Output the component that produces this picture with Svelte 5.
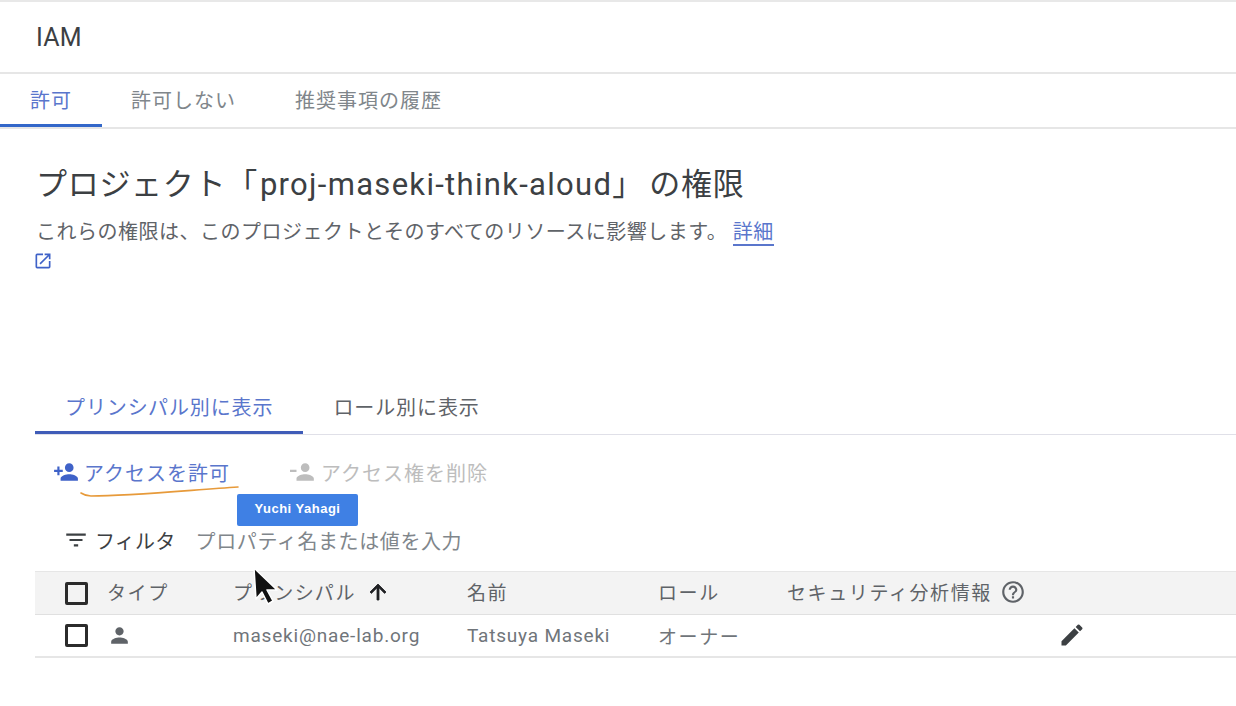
<script>
  const topTabs = ['許可', '許可しない', '推奨事項の履歴'];
</script>

<div class="page">
  <header class="bar">IAM</header>

  <nav class="top-tabs">
    {#each topTabs as tab, i}
      <div class="top-tab" class:active={i === 0}>{tab}</div>
    {/each}
  </nav>

  <main class="content">
    <h1>プロジェクト「<span class="latin">proj-maseki-think-aloud</span>」 の権限</h1>
    <p class="desc">これらの権限は、このプロジェクトとそのすべてのリソースに影響します。 <a href="#top">詳細</a></p>
    <svg class="ext" viewBox="0 0 24 24" width="20" height="20"><path fill="#3f62c8" d="M19 19H5V5h7V3H5a2 2 0 0 0-2 2v14a2 2 0 0 0 2 2h14a2 2 0 0 0 2-2v-7h-2v7zM14 3v2h3.59l-9.83 9.83 1.41 1.41L19 6.41V10h2V3h-7z"/></svg>

    <div class="view-tabs">
      <div class="view-tab active">プリンシパル別に表示</div>
      <div class="view-tab">ロール別に表示</div>
    </div>

    <div class="actions">
      <div class="action grant">
        <svg viewBox="0 0 24 24" width="26" height="26"><path fill="#3f62c8" d="M15 12c2.21 0 4-1.79 4-4s-1.79-4-4-4-4 1.79-4 4 1.79 4 4 4zm-9-2V7H4v3H1v2h3v3h2v-3h3v-2H6zm9 4c-2.67 0-8 1.34-8 4v2h16v-2c0-2.66-5.33-4-8-4z"/></svg>
        <span>アクセスを許可</span>
      </div>
      <div class="action remove">
        <svg viewBox="0 0 24 24" width="26" height="26"><path fill="#bdbdbd" d="M14 12c2.21 0 4-1.79 4-4s-1.79-4-4-4-4 1.79-4 4 1.79 4 4 4zM0 10v2h6v-2H0zm14 4c-2.67 0-8 1.34-8 4v2h16v-2c0-2.66-5.33-4-8-4z"/></svg>
        <span>アクセス権を削除</span>
      </div>
    </div>

    <div class="filter">
      <svg viewBox="0 0 24 24" width="26" height="26"><path fill="#3c4043" d="M10 18h4v-2h-4v2zM3 6v2h18V6H3zm3 7h12v-2H6v2z"/></svg>
      <span class="filter-label">フィルタ</span>
      <span class="filter-hint">プロパティ名または値を入力</span>
    </div>

    <div class="table">
      <div class="row head">
        <span class="c-check"><i class="box"></i></span>
        <span class="c-type label">タイプ</span>
        <span class="c-principal label">プリンシパル
          <svg viewBox="0 0 24 24" width="24" height="24"><path fill="#202124" stroke="#202124" stroke-width="0.8" d="M4 12l1.41 1.41L11 7.83V20h2V7.83l5.58 5.59L20 12l-8-8-8 8z"/></svg>
        </span>
        <span class="c-name label">名前</span>
        <span class="c-role label">ロール</span>
        <span class="c-sec label">セキュリティ分析情報
          <svg viewBox="0 0 24 24" width="26" height="26"><path fill="#5f6368" d="M11 18h2v-2h-2v2zm1-16C6.48 2 2 6.48 2 12s4.48 10 10 10 10-4.48 10-10S17.52 2 12 2zm0 18c-4.41 0-8-3.59-8-8s3.59-8 8-8 8 3.59 8 8-3.59 8-8 8zm0-14c-2.21 0-4 1.79-4 4h2c0-1.1.9-2 2-2s2 .9 2 2c0 2-3 1.75-3 5h2c0-2.25 3-2.5 3-5 0-2.21-1.79-4-4-4z"/></svg>
        </span>
      </div>
      <div class="row body">
        <span class="c-check"><i class="box"></i></span>
        <span class="c-type">
          <svg viewBox="0 0 24 24" width="25" height="25"><path fill="#5f6368" d="M12 12c2.21 0 4-1.79 4-4s-1.79-4-4-4-4 1.79-4 4 1.79 4 4 4zm0 2c-2.67 0-8 1.34-8 4v2h16v-2c0-2.66-5.33-4-8-4z"/></svg>
        </span>
        <span class="c-principal">maseki@nae-lab.org</span>
        <span class="c-name">Tatsuya Maseki</span>
        <span class="c-role owner">オーナー</span>
        <span class="c-sec"></span>
        <svg class="edit" viewBox="0 0 24 24" width="28" height="28"><path fill="#3c4043" d="M3 17.25V21h3.75L17.81 9.94l-3.75-3.75L3 17.25zM20.71 7.04a1 1 0 0 0 0-1.41l-2.34-2.34a1 1 0 0 0-1.41 0l-1.83 1.83 3.75 3.75 1.83-1.83z"/></svg>
      </div>
    </div>
  </main>

  <!-- things lying over the recording -->
  <svg class="scribble" viewBox="0 0 160 16" width="160" height="16"><path d="M1 9c3 2 5 3 10 3 40 0 100-6 147-9" fill="none" stroke="#e79a3a" stroke-width="1.6" stroke-linecap="round"/></svg>
  <div class="name-tag">Yuchi Yahagi</div>
  <svg class="cursor" viewBox="0 0 28 40" width="28" height="40"><path d="M2 2l2 31 6-7 6 12 5-3-6-11h10z" fill="#111" stroke="#fff" stroke-width="1.5" stroke-linejoin="round"/></svg>
</div>

<style>
  :global(body) {
    margin: 0;
    background: #fff;
  }

  .page {
    position: relative;
    width: 1236px;
    height: 706px;
    overflow: hidden;
    box-sizing: border-box;
    border-top: 2px solid #e8e8e8;
    font-family: Roboto, "Noto Sans CJK JP", sans-serif;
    color: #5f6368;
    text-spacing-trim: space-all;
  }

  .bar {
    height: 70px;
    padding-left: 36px;
    display: flex;
    align-items: center;
    font-size: 25px;
    letter-spacing: 0.2px;
    color: #3c4043;
    border-bottom: 2px solid #e6e6e6;
  }

  .top-tabs {
    display: flex;
    height: 53px;
    border-bottom: 2px solid #e6e6e6;
  }

  .top-tab {
    box-sizing: border-box;
    height: 53px;
    display: flex;
    align-items: center;
    font-size: 20px;
    padding: 1px 30px 0 29px;
    letter-spacing: 1px;
    color: #80868b;
    border-bottom: 3px solid transparent;
  }

  .top-tab.active {
    width: 102px;
    padding-left: 30px;
    color: #5a76cc;
    border-bottom-color: #3367c9;
  }

  .content {
    padding: 0 0 0 36px;
  }

  h1 {
    margin: 34px 0 0;
    font-size: 31px;
    font-weight: 400;
    line-height: 44px;
    letter-spacing: 0.7px;
    word-spacing: -3px;
    color: #3c4043;
  }

  .latin {
    margin-left: 2px;
    letter-spacing: 1.3px;
  }

  .desc {
    margin: 10px 0 0;
    font-size: 20px;
    line-height: 30px;
    letter-spacing: 0.5px;
    color: #5f6368;
  }

  .desc a {
    color: #5a76cc;
    text-decoration: none;
    border-bottom: 2px solid #5a76cc;
  }

  .ext {
    display: block;
    margin: 4px 0 0 -3px;
  }

  .view-tabs {
    display: flex;
    margin: 110px 0 0 -1px;
    height: 53px;
    border-bottom: 1px solid #e0e0e8;
    align-items: stretch;
  }

  .view-tab {
    box-sizing: border-box;
    height: 53px;
    display: flex;
    align-items: center;
    padding: 0 30px 2px;
    font-size: 20px;
    letter-spacing: 0.9px;
    color: #5f6368;
  }

  .view-tab.active {
    color: #5a76cc;
    padding-bottom: 0;
    border-bottom: 3px solid #3f5cb8;
  }

  .actions {
    display: flex;
    align-items: center;
    margin-top: 23px;
    padding-left: 17px;
    height: 28px;
    font-size: 20px;
    letter-spacing: 1px;
  }

  .action {
    display: flex;
    align-items: center;
    gap: 5px;
  }

  .grant {
    color: #5a76cc;
    margin-right: 60px;
  }

  .remove {
    color: #bdbdbd;
  }

  .filter {
    display: flex;
    align-items: center;
    margin-top: 39px;
    padding-left: 27px;
    height: 30px;
    font-size: 20px;
  }

  .filter-label {
    margin-left: 6px;
    color: #3c4043;
    letter-spacing: 0.25px;
  }

  .filter-hint {
    margin-left: 20px;
    color: #80868b;
    letter-spacing: 0.6px;
  }

  .table {
    margin: 16px 0 0 -1px;
  }

  .row {
    display: flex;
    align-items: center;
    font-size: 19px;
    position: relative;
  }

  .head {
    height: 42px;
    background: #f3f3f3;
    border-top: 1px solid #e6e6e6;
    border-bottom: 1px solid #e0e0e0;
    letter-spacing: 1.6px;
  }

  .label {
    padding-bottom: 3px;
  }

  .body {
    height: 41px;
    letter-spacing: 0.8px;
    color: #70757a;
    border-bottom: 2px solid #e6e6e6;
  }

  .c-check {
    width: 72px;
    padding-left: 30px;
    box-sizing: border-box;
    display: flex;
  }

  .box {
    box-sizing: border-box;
    width: 23px;
    height: 23px;
    border: 3px solid #2b2b2b;
    border-radius: 2px;
  }

  .c-type {
    width: 126px;
    display: flex;
  }

  .c-principal {
    width: 234px;
    display: flex;
    align-items: center;
    gap: 10px;
    white-space: nowrap;
  }

  .c-name {
    width: 191px;
  }

  .c-role {
    width: 129px;
  }

  .owner {
    letter-spacing: 1.6px;
  }

  .c-sec {
    display: flex;
    align-items: center;
    gap: 8px;
  }

  .edit {
    position: absolute;
    left: 1023px;
    top: 6px;
  }

  .scribble {
    position: absolute;
    left: 80px;
    top: 482px;
  }

  .name-tag {
    position: absolute;
    left: 237px;
    top: 492px;
    width: 121px;
    height: 32px;
    box-sizing: border-box;
    padding-top: 7px;
    text-align: center;
    background: #3f80e4;
    border-radius: 2px;
    color: #fff;
    font-family: "Liberation Sans", sans-serif;
    font-size: 13px;
    letter-spacing: 0.5px;
    font-weight: 700;
  }

  .cursor {
    position: absolute;
    left: 252px;
    top: 564px;
  }
</style>
